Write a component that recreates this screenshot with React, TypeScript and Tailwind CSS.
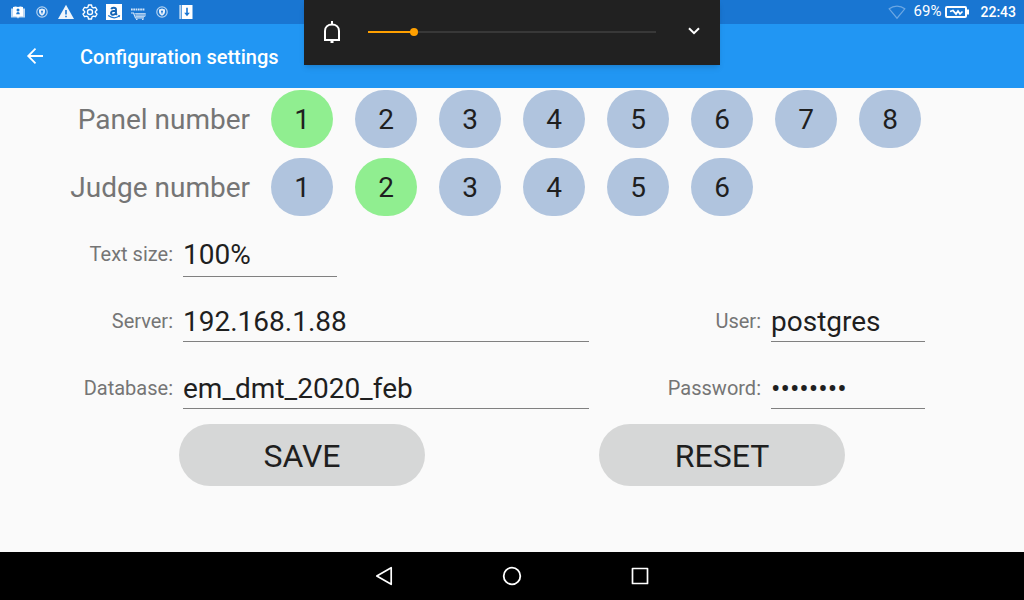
import { useState, type ReactNode } from "react";

const ICON = "size-4 shrink-0";

function BookIcon() {
  return (
    <svg viewBox="0 0 16 16" className={ICON} aria-hidden="true">
      <path d="M1 4.500h14V13.500H9.500L8 14.500l-1.500-1H1z" fill="#bcd7f3" />
      <path d="M3 3C4.800 2.200 6.600 2.200 8 3c1.400-.8 3.200-.8 5 0v9.500c-1.800-.6-3.600-.4-5 .5-1.400-.9-3.200-1.100-5-.5z" fill="#fff" />
      <circle cx="8" cy="6" r="1.500" fill="#1976d2" />
      <path d="M6.200 10.300c0-3.200 3.600-3.200 3.600 0z" fill="#1976d2" />
    </svg>
  );
}

function ShieldIcon() {
  return (
    <svg viewBox="0 0 16 16" className={ICON} aria-hidden="true">
      <circle cx="8" cy="8" r="5.200" fill="none" stroke="#b4d2f1" strokeWidth="1.200" />
      <path d="M8 4.600 11 5.600v2.200c0 1.900-1.200 3.100-3 3.900-1.800-.8-3-2-3-3.900V5.600z" fill="#e4effb" />
      <circle cx="8" cy="7.500" r="1" fill="#1976d2" />
      <path d="M7.600 8h.8v1.800h-.8z" fill="#1976d2" />
    </svg>
  );
}

function WarningIcon() {
  return (
    <svg viewBox="0 0 16 16" className={ICON} aria-hidden="true">
      <path d="M8 .8 16 15H0z" fill="#eef5fc" />
      <path d="M7.200 6h1.600v4.500H7.200zM7.200 11.700h1.600v1.600H7.200z" fill="#1976d2" />
    </svg>
  );
}

function GearIcon() {
  return (
    <svg viewBox="0 0 24 24" className={ICON} fill="none" stroke="#fff" strokeWidth="2" strokeLinejoin="round" aria-hidden="true">
      <path d="M9.700 1.500h4.600l.7 3.200 2 1.200 3.200-1 2.300 4-2.500 2.200v1.800l2.500 2.200-2.300 4-3.200-1-2 1.200-.7 3.200H9.700L9 19.300l-2-1.200-3.200 1-2.300-4L4 12.900v-1.800L1.500 8.900l2.300-4 3.200 1 2-1.200z" />
      <circle cx="12" cy="12" r="3.800" />
    </svg>
  );
}

function StoreIcon() {
  return (
    <svg viewBox="0 0 16 16" className={ICON} aria-hidden="true">
      <path d="M0 0h16v16H0z" fill="#fff" />
      <path d="M5.300 5.300C5.700 3.200 10 3.100 10 5.600v4.100l.9 1.100M10 6.700C7.500 6.700 5 7 5 9.100c0 2.300 4 2.200 5-.6" fill="none" stroke="#1565b5" strokeWidth="1.900" />
      <path d="M2.200 11.600c3.500 2.500 8 2.600 11.200.5" fill="none" stroke="#1976d2" strokeWidth="1.200" />
      <path d="m11.700 11.400 2.500-.3-.7 2.500z" fill="#1976d2" />
    </svg>
  );
}

function CartIcon() {
  return (
    <svg viewBox="0 0 16 16" className={ICON} fill="none" stroke="#d5e6f8" aria-hidden="true">
      <path d="M1 5.500h14" strokeWidth="2.200" strokeDasharray="1.700 .6" />
      <path d="M1 9h2.500l2 5H14" strokeWidth="1.100" />
      <path d="M4.500 9.500h11M5 11h10.500M5.500 12.500H15M7 9v5M9 9v5M11 9v5M13 9v5M15 9v3.500" strokeWidth=".7" />
      <path d="M6 15.400h1.500M12 15.400h1.500" strokeWidth="1.200" />
    </svg>
  );
}

function DownloadIcon() {
  return (
    <svg viewBox="0 0 16 16" className={ICON} aria-hidden="true">
      <path d="M1.500 1h1.200v14H1.500zM3.700 1h10.800v14H3.700z" fill="#fff" />
      <path d="M8.200 3.800h1.600v5h2L9 12.200 6.200 8.800h2z" fill="#1976d2" />
    </svg>
  );
}

function StatusBar() {
  return (
    <div className="flex h-6 items-center justify-between bg-[#1976d2] pr-2 pl-[10px] text-sm text-white">
      <div className="flex gap-2">
        <BookIcon />
        <ShieldIcon />
        <WarningIcon />
        <GearIcon />
        <StoreIcon />
        <CartIcon />
        <ShieldIcon />
        <DownloadIcon />
      </div>
      <div className="flex items-center">
        <svg viewBox="0 0 18 16" className="mr-2 h-4 w-[18px]" aria-hidden="true">
          <path d="M1.200 4.800C5.500 1.100 12.500 1.100 16.800 4.800L9 14.200z" fill="none" stroke="#6ba7e3" strokeWidth="1.200" />
        </svg>
        <span className="mr-1 text-[15px]">69%</span>
        <svg viewBox="0 0 24 12" className="mr-[11px] h-3 w-6" aria-hidden="true">
          <rect x="1" y="1" width="20" height="10" rx="1" fill="none" stroke="#fff" strokeWidth="2" />
          <path d="M22 3.500h2v5h-2z" fill="#fff" />
          <path d="m5 5.500 3-1 3 3.500 2-3 2 3 2.500-2.500" fill="none" stroke="#fff" strokeWidth="1.700" />
        </svg>
        <span className="font-medium">22:43</span>
      </div>
    </div>
  );
}

function VolumePanel() {
  return (
    <div className="absolute top-0 left-1/2 flex h-[65px] w-[416px] -translate-x-1/2 items-center bg-[#212121] pr-[14px] pb-px pl-4 shadow-md">
      <button type="button" aria-label="Notification volume" className="mr-6 size-6">
        <svg viewBox="0 0 24 24" className="size-6" fill="none" stroke="#fff" strokeWidth="2" aria-hidden="true">
          <path d="M5 20V11c0-4 3-6.500 7-6.500s7 2.500 7 6.500v9z" />
          <path d="M12 1v3M10.500 22h3" />
        </svg>
      </button>
      <input
        type="range"
        aria-label="Volume"
        defaultValue={15}
        className="h-4 min-w-0 flex-1 appearance-none bg-transparent [&::-webkit-slider-runnable-track]:h-[2px] [&::-webkit-slider-runnable-track]:bg-[linear-gradient(to_right,#ffa000_16%,#383838_16%)] [&::-webkit-slider-thumb]:-mt-[3px] [&::-webkit-slider-thumb]:size-2 [&::-webkit-slider-thumb]:appearance-none [&::-webkit-slider-thumb]:rounded-full [&::-webkit-slider-thumb]:bg-[#ffa000]"
      />
      <button type="button" aria-label="Expand" className="ml-[26px] size-6">
        <svg viewBox="0 0 24 24" className="size-6" fill="none" stroke="#fff" strokeWidth="2" aria-hidden="true">
          <path d="m7 8.200 5 5 5-5" />
        </svg>
      </button>
    </div>
  );
}

type NumberRowProps = { label: string; count: number; value: number; onChange: (n: number) => void };

function NumberRow({ label, count, value, onChange }: NumberRowProps) {
  const numbers = Array.from({ length: count }, (_, i) => i + 1);
  return (
    <div role="group" aria-label={label} className="flex items-center">
      <span className="mr-[21px] w-[250px] shrink-0 pt-[2px] text-right text-[28px] leading-8 text-[#757575]">{label}</span>
      <div className="flex gap-[22px]">
        {numbers.map((n) => (
          <button
            key={n}
            type="button"
            aria-pressed={n === value}
            onClick={() => onChange(n)}
            className={`h-[58px] w-[62px] rounded-full pt-[2px] text-[28px] leading-8 ${n === value ? "bg-[#90ee90]" : "bg-[#b0c4de]"}`}
          >
            {n}
          </button>
        ))}
      </div>
    </div>
  );
}

function FieldLabel({ htmlFor, children }: { htmlFor: string; children: ReactNode }) {
  return (
    <label htmlFor={htmlFor} className="pb-[2px] text-right text-xl text-[#757575]">
      {children}
    </label>
  );
}

const FIELD = "h-[41px] w-full min-w-0 rounded-none border-b border-[#808080] bg-transparent pt-[2px] text-[28px] outline-none";

export default function App() {
  const [panel, setPanel] = useState(1);
  const [judge, setJudge] = useState(2);

  return (
    <div className="relative flex min-h-screen flex-col bg-[#fafafa] font-['Roboto',sans-serif] text-[#1f1f1f]">
      <StatusBar />
      <header className="flex h-16 items-center bg-[#2196f3] text-white">
        <button type="button" aria-label="Back" className="mr-8 ml-6 size-6">
          <svg viewBox="0 0 24 24" className="size-6" fill="none" stroke="#fff" strokeWidth="1.800" aria-hidden="true">
            <path d="M19 12H4.700M11.500 4.700 4.200 12l7.300 7.300" />
          </svg>
        </button>
        <h1 className="pt-[2px] text-xl font-medium">Configuration settings</h1>
      </header>
      <VolumePanel />

      <main className="flex-1 pt-[2px] pb-8">
        <div className="flex flex-col gap-[10px]">
          <NumberRow label="Panel number" count={8} value={panel} onChange={setPanel} />
          <NumberRow label="Judge number" count={6} value={judge} onChange={setJudge} />
        </div>
        <form onSubmit={(e) => e.preventDefault()}>
          <div className="mt-[5px] grid auto-rows-[67px] grid-cols-[173px_minmax(0,1fr)_162px_154px] items-center gap-x-[10px] pr-[99px]">
            <FieldLabel htmlFor="text-size">Text size:</FieldLabel>
            <select
              id="text-size"
              defaultValue="100%"
              className="col-span-3 h-[45px] w-[154px] appearance-none rounded-none border-b border-[#808080] bg-transparent pt-[2px] text-[28px] outline-none"
            >
              <option>100%</option>
            </select>
            <FieldLabel htmlFor="server">Server:</FieldLabel>
            <input id="server" defaultValue="192.168.1.88" className={FIELD} />
            <FieldLabel htmlFor="user">User:</FieldLabel>
            <input id="user" defaultValue="postgres" className={FIELD} />
            <FieldLabel htmlFor="database">Database:</FieldLabel>
            <input id="database" defaultValue="em_dmt_2020_feb" className={FIELD} />
            <FieldLabel htmlFor="password">Password:</FieldLabel>
            <input id="password" type="password" defaultValue="postgres" className={FIELD} />
          </div>
          <div className="mt-[2px] grid grid-cols-2 gap-[174px] px-[179px]">
            <button type="submit" className="h-[62px] rounded-full bg-[#d6d7d7] pt-[2px] text-[32px]">SAVE</button>
            <button type="reset" className="h-[62px] rounded-full bg-[#d6d7d7] pt-[2px] text-[32px]">RESET</button>
          </div>
        </form>
      </main>

      <nav aria-label="System" className="flex h-12 items-center justify-center gap-[104px] bg-black">
        <button type="button" aria-label="Back" className="size-6">
          <svg viewBox="0 0 24 24" className="size-6" fill="none" stroke="#fff" strokeWidth="1.700" strokeLinejoin="round" aria-hidden="true">
            <path d="M19.200 3.700v16.600L4.800 12z" />
          </svg>
        </button>
        <button type="button" aria-label="Home" className="size-6">
          <svg viewBox="0 0 24 24" className="size-6" fill="none" stroke="#fff" strokeWidth="1.800" aria-hidden="true">
            <circle cx="12" cy="12" r="8.300" />
          </svg>
        </button>
        <button type="button" aria-label="Recent apps" className="size-6">
          <svg viewBox="0 0 24 24" className="size-6" fill="none" stroke="#fff" strokeWidth="1.700" strokeLinejoin="round" aria-hidden="true">
            <path d="M4.500 4.500h15v15h-15z" />
          </svg>
        </button>
      </nav>
    </div>
  );
}
